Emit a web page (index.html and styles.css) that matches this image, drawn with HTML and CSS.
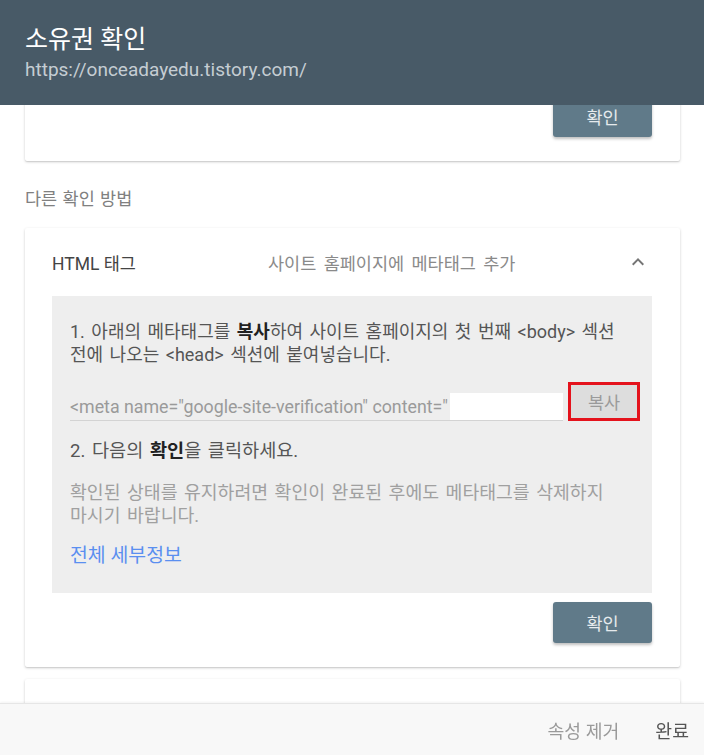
FILE: index.html
```html
<!DOCTYPE html>
<html lang="ko">
<head>
<meta charset="utf-8">
<title>소유권 확인</title>
<link rel="stylesheet" href="styles.css">
</head>
<body>
<header class="top">
  <h1 class="top-title">소유권 확인</h1>
  <div class="top-url">https://onceadayedu.tistory.com/</div>
</header>

<main class="content">
  <section class="card card-first">
    <div class="actions"><button class="btn">확인</button></div>
  </section>

  <div class="label">다른 확인 방법</div>

  <section class="card">
    <div class="card-head">
      <div class="head-title">HTML 태그</div>
      <div class="head-sub">사이트 홈페이지에 메타태그 추가</div>
      <svg class="chev" viewBox="0 0 24 24" width="24" height="24"><path d="M7.4 15.4 12 10.8l4.6 4.6L18 14l-6-6-6 6z" fill="#757575"/></svg>
    </div>
    <div class="panel">
      <p class="step">1. 아래의 메타태그를 <b>복사</b>하여 사이트 홈페이지의 첫 번째 &lt;body&gt; 섹션 전에 나오는 &lt;head&gt; 섹션에 붙여넣습니다.</p>
      <div class="meta-row">
        <div class="meta-input"><span class="meta-text">&lt;meta name="google-site-verification" content="</span><span class="meta-mask"></span></div>
        <button class="copy">복사</button>
      </div>
      <p class="step step2">2. 다음의 <b>확인</b>을 클릭하세요.</p>
      <p class="note">확인된 상태를 유지하려면 확인이 완료된 후에도 메타태그를 삭제하지 마시기 바랍니다.</p>
      <a class="more" href="#">전체 세부정보</a>
    </div>
    <div class="actions"><button class="btn">확인</button></div>
  </section>

  <section class="card card-next"></section>
</main>

<footer class="bottom">
  <button class="link-btn muted">속성 제거</button>
  <button class="link-btn">완료</button>
</footer>
</body>
</html>
```

FILE: styles.css
```css
* { box-sizing: border-box; }
html, body { margin: 0; padding: 0; }
body {
  width: 704px;
  height: 755px;
  overflow: hidden;
  background: #fff;
  font-family: Roboto, "Noto Sans CJK KR", sans-serif;
  color: #444;
  word-break: keep-all;
}
.top {
  position: fixed;
  top: 0; left: 0; right: 0;
  height: 105px;
  background: #485a67;
  padding: 25px 25px 0;
  z-index: 5;
}
.top-title {
  margin: 0;
  font-size: 25px;
  font-weight: 400;
  line-height: 30px;
  color: #fff;
}
.top-url {
  margin-top: 4px;
  font-size: 19px;
  line-height: 22px;
  color: #c5cdd3;
}
.content {
  padding: 0 24px 0 25px;
}
.card {
  background: #fff;
  border-radius: 2px;
  box-shadow: 0 1px 3px rgba(0,0,0,0.18), 0 1px 1px rgba(0,0,0,0.08);
}
.card-first {
  padding-top: 96px;
}
.actions {
  display: flex;
  justify-content: flex-end;
  padding: 0 28px 24px 0;
}
.btn {
  width: 99px;
  height: 41px;
  border: 0;
  border-radius: 3px;
  background: #607a89;
  color: #e6eaed;
  font-family: inherit;
  font-size: 17.5px;
  box-shadow: 0 2px 3px rgba(0,0,0,0.25);
}
.label {
  padding: 28px 0 19px;
  font-size: 17.5px;
  line-height: 20px;
  color: #808080;
  word-spacing: 1px;
}
.card-head {
  height: 68px;
  display: flex;
  align-items: center;
  padding: 0 30px 0 27px;
  font-size: 17.5px;
}
.head-title {
  width: 216px;
  color: #444;
}
.head-sub {
  flex: 1;
  color: #8a8a8a;
  word-spacing: 3px;
}
.chev { display: block; }
.panel {
  margin: 0 28px 0 27px;
  background: #eeeeee;
  padding: 24px 10px 26px 18px;
}
.step {
  margin: 0;
  font-size: 18px;
  line-height: 23px;
  color: #555;
  word-spacing: 2px;
}
.step b { color: #222; font-weight: 700; }
.meta-row {
  display: flex;
  align-items: flex-end;
  margin-top: 16px;
  height: 39px;
}
.meta-input {
  width: 493px;
  display: flex;
  align-items: center;
  height: 28px;
  border-bottom: 1px solid #d3d3d3;
  overflow: hidden;
  white-space: nowrap;
}
.meta-text {
  width: 380px;
  flex: none;
  overflow: hidden;
  font-size: 17.8px;
  color: #9a9a9a;
}
.meta-mask {
  width: 113px;
  height: 27px;
  flex: none;
  background: #fff;
}
.copy {
  margin-left: 5px;
  width: 72px;
  height: 39px;
  border: 3px solid #e4121c;
  background: #dddddd;
  color: #9a9a9a;
  font-family: inherit;
  font-size: 17.5px;
  padding: 0;
}
.step2 { margin-top: 19px; font-size: 18.6px; }
.note {
  margin: 18px 0 0;
  font-size: 18.3px;
  line-height: 23px;
  color: #a0a0a0;
  word-spacing: 2px;
}
.more {
  display: block;
  margin-top: 18px;
  font-size: 19.4px;
  line-height: 22px;
  color: #5a8ff0;
  text-decoration: none;
}
.card .panel + .actions { padding-top: 9px; }
.card-next {
  margin-top: 12px;
  height: 80px;
}
.bottom {
  position: fixed;
  left: 0; right: 0; bottom: 0;
  height: 52px;
  background: #f8f8f8;
  border-top: 1px solid #e6e6e6;
  box-shadow: 0 -1px 2px rgba(0,0,0,0.05);
  display: flex;
  align-items: center;
  justify-content: flex-end;
  padding-right: 11px;
  gap: 28px;
  z-index: 5;
}
.link-btn {
  border: 0;
  background: none;
  font-family: inherit;
  font-size: 18.3px;
  color: #555;
  padding: 4px;
}
.link-btn.muted { color: #9a9a9a; }
```
